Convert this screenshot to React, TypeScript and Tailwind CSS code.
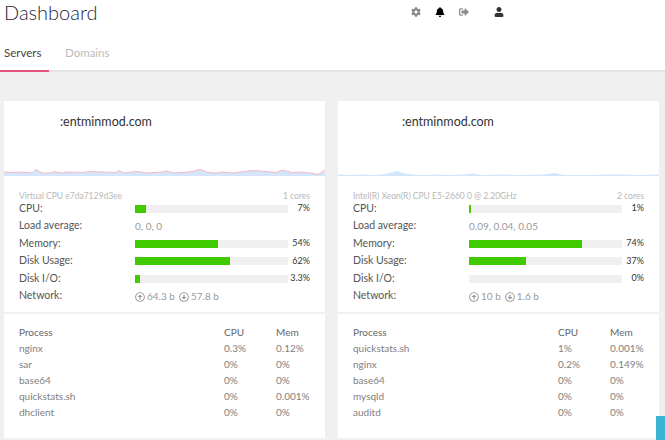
import { FaBell, FaCog, FaSignOutAlt, FaUser, FaRegArrowAltCircleUp, FaRegArrowAltCircleDown } from "react-icons/fa";

type Stat = { label: string; pct: number; value: string };

type Server = {
  host: string;
  hostClass: string;
  cpu: string;
  cores: string;
  load: string;
  up: string;
  down: string;
  stats: { cpu: Stat; memory: Stat; disk: Stat; io: Stat };
  processes: string[][];
  line: string;
};

const servers: Server[] = [
  {
    host: ":entminmod.com",
    hostClass: "pl-[56px]",
    cpu: "Virtual CPU e7da7129d3ee",
    cores: "1 cores",
    load: "0, 0, 0",
    up: "64.3 b",
    down: "57.8 b",
    stats: {
      cpu: { label: "CPU:", pct: 7, value: "7%" },
      memory: { label: "Memory:", pct: 54, value: "54%" },
      disk: { label: "Disk Usage:", pct: 62, value: "62%" },
      io: { label: "Disk I/O:", pct: 3.3, value: "3.3%" },
    },
    processes: [
      ["nginx", "0.3%", "0.12%"],
      ["sar", "0%", "0%"],
      ["base64", "0%", "0%"],
      ["quickstats.sh", "0%", "0.001%"],
      ["dhclient", "0%", "0%"],
    ],
    line: "M0 7 L12 7.5 L18 7 L28 8 L32 4.5 L38 8 L46 8 L50 6.5 L54 7.5 L58 8 L62 7 L80 7.5 L85 6.5 L98 7 L112 7.5 L114 5.5 L120 8 L128 7 L134 6.5 L142 8 L150 7.5 L158 7 L162 6 L170 8 L180 7.5 L188 6.5 L196 4.5 L204 7.5 L212 8 L218 7 L228 8 L236 7 L249 5.5 L262 6.5 L272 7.5 L278 5 L288 7.5 L296 7 L306 8 L314 9.5 L321 5",
  },
  {
    host: ":entminmod.com",
    hostClass: "pl-[64px]",
    cpu: "Intel(R) Xeon(R) CPU E5-2660 0 @ 2.20GHz",
    cores: "2 cores",
    load: "0.09, 0.04, 0.05",
    up: "10 b",
    down: "1.6 b",
    stats: {
      cpu: { label: "CPU:", pct: 1, value: "1%" },
      memory: { label: "Memory:", pct: 74, value: "74%" },
      disk: { label: "Disk Usage:", pct: 37, value: "37%" },
      io: { label: "Disk I/O:", pct: 0, value: "0%" },
    },
    processes: [
      ["quickstats.sh", "1%", "0.001%"],
      ["nginx", "0.2%", "0.149%"],
      ["base64", "0%", "0%"],
      ["mysqld", "0%", "0%"],
      ["auditd", "0%", "0%"],
    ],
    line: "M0 9.5 L12 10 L25 9.5 L32 10 L42 9.8 L50 8.5 L59 6 L68 9 L75 9.5 L85 10 L100 9.5 L110 10 L125 9.5 L135 8.5 L142 10 L165 9.5 L180 10 L205 9.5 L217 8 L226 10 L255 10 L270 9.5 L285 9.5 L300 10 L321 9.5",
  },
];

function Bar({ stat }: { stat: Stat }) {
  return (
    <div className="flex h-[17.5px] items-center">
      <div className="w-[116px] text-[10.5px] text-[#555]">{stat.label}</div>
      <div className="h-[8px] w-[153px] bg-[#f0f0f0]">
        <div className="h-full bg-[#3fcb00]" style={{ width: `${stat.pct}%` }} />
      </div>
      <div className="-mt-[2px] w-[22px] text-right text-[9px] whitespace-nowrap text-[#333]">{stat.value}</div>
    </div>
  );
}

function ServerCard({ server }: { server: Server }) {
  return (
    <div className="flex h-[337px] w-[321px] flex-col bg-white">
      <div className={`h-[64px] pt-[13px] text-[12.5px] leading-[16px] text-[#333] ${server.hostClass}`}>{server.host}</div>
      <svg viewBox="0 0 321 11" className="block h-[11px] w-[321px] shrink-0">
        <path d={`${server.line} L321 11 L0 11 Z`} fill="#d3e6fb" />
        {servers[0] === server && <path d={server.line} fill="none" stroke="#f7b9c2" strokeWidth="1" />}
      </svg>
      <div className="px-[15px] pt-[15px]">
        <div className="flex h-[10px] items-center justify-between text-[8.5px] text-[#b8b8b8]">
          <span>{server.cpu}</span>
          <span>{server.cores}</span>
        </div>
        <div className="-mt-[1px]">
          <Bar stat={server.stats.cpu} />
          <div className="flex h-[17.5px] items-center">
            <div className="w-[116px] text-[10.5px] text-[#555]">Load average:</div>
            <div className="pt-[1px] text-[10px] text-[#9a9a9a]">{server.load}</div>
          </div>
          <Bar stat={server.stats.memory} />
          <Bar stat={server.stats.disk} />
          <Bar stat={server.stats.io} />
          <div className="flex h-[17.5px] items-center">
            <div className="w-[116px] text-[10.5px] text-[#555]">Network:</div>
            <div className="flex items-center pt-[1px] text-[10px] text-[#9a9a9a]">
              <FaRegArrowAltCircleUp className="mr-[2px]" />
              <span className="mr-[4px]">{server.up}</span>
              <FaRegArrowAltCircleDown className="mr-[2px]" />
              <span>{server.down}</span>
            </div>
          </div>
        </div>
      </div>
      <div className="mt-[7px] border-t-2 border-[#f0f0f0] px-[15px] pt-[10.5px]">
        <div className="flex h-[16px] items-center text-[10px] text-[#666]">
          <span className="w-[205px]">Process</span>
          <span className="w-[52px]">CPU</span>
          <span>Mem</span>
        </div>
        {server.processes.map((row) => (
          <div key={row[0]} className="flex h-[16px] items-center text-[10px] text-[#808080]">
            <span className="w-[205px]">{row[0]}</span>
            <span className="w-[52px]">{row[1]}</span>
            <span>{row[2]}</span>
          </div>
        ))}
      </div>
    </div>
  );
}

export default function App() {
  return (
    <div className="relative h-[440px] w-[665px] overflow-hidden bg-[#f0f0f0] font-['Lato',sans-serif]">
      <div className="h-[72px] border-b-2 border-[#e2e2e2] bg-white">
        <div className="flex h-[24px] items-center">
          <h1 className="w-[411px] pl-[4px] text-[20px] leading-[24px] font-light text-[#1f2340]">Dashboard</h1>
          <div className="flex items-center text-[10px]">
            <FaCog className="text-[#8a8a8a]" />
            <FaBell className="ml-[14px] text-black" />
            <FaSignOutAlt className="ml-[14px] text-[#8a8a8a]" />
            <FaUser className="ml-[25px] text-[#333]" />
          </div>
        </div>
        <div className="mt-[18px] flex">
          <div className="-mb-[2px] h-[30px] w-[49px] border-b-2 border-[#e8527f] pl-[4px] pt-[3px] text-[11.5px] leading-[16px] text-[#444]">Servers</div>
          <div className="ml-[16px] pt-[3px] text-[11.5px] leading-[16px] text-[#bbb]">Domains</div>
        </div>
      </div>
      <div className="flex gap-[13px] pl-[4px] pt-[29px]">
        {servers.map((server, i) => (
          <ServerCard key={i} server={server} />
        ))}
      </div>
      <div className="absolute right-0 bottom-0 h-[24px] w-[9px] bg-[#3ab5d4]" />
    </div>
  );
}
